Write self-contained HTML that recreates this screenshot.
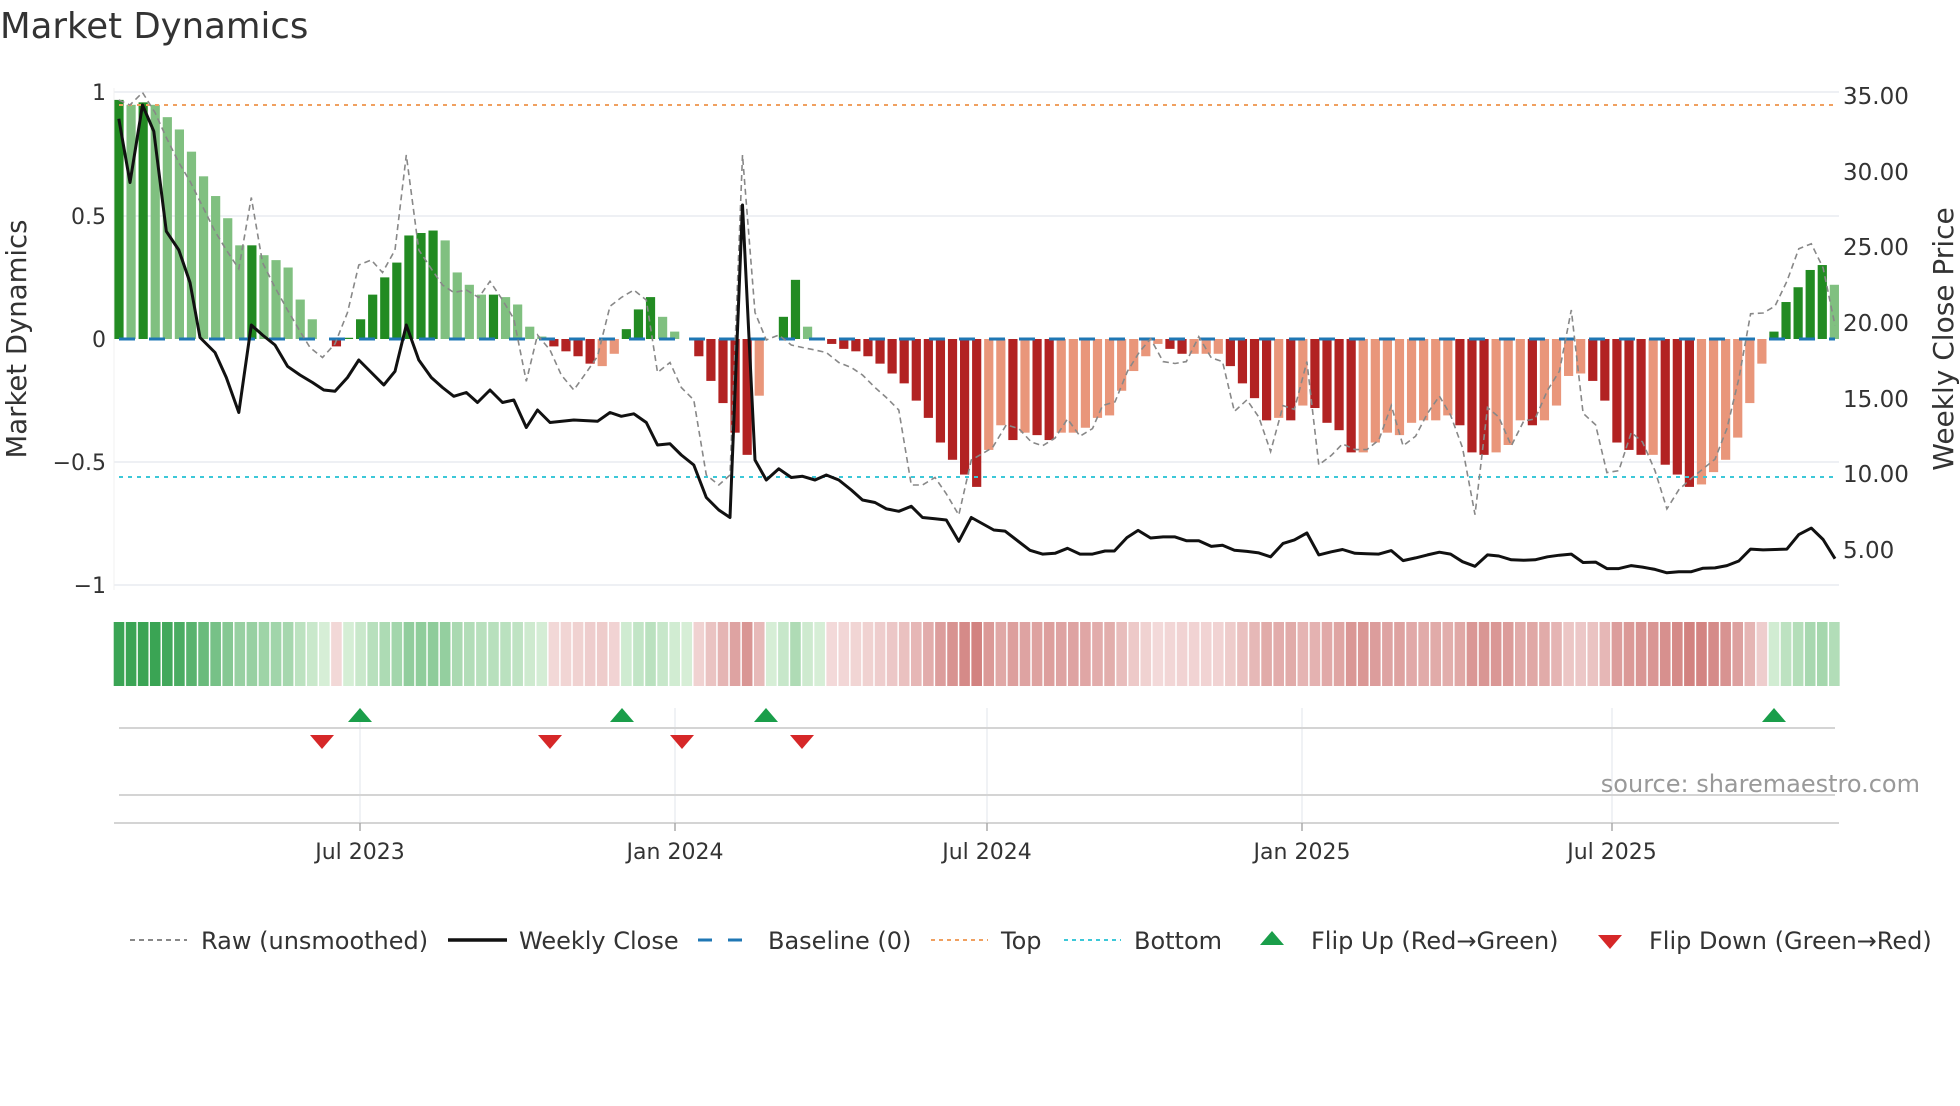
<!DOCTYPE html>
<html><head><meta charset="utf-8">
<style>
html,body{margin:0;padding:0;background:#fff;}
body{width:1960px;height:1102px;overflow:hidden;font-family:"DejaVu Sans","Liberation Sans",sans-serif;}
svg text{font-family:"DejaVu Sans","Liberation Sans",sans-serif;}
</style></head>
<body>
<svg id="s" width="1960" height="1102" viewBox="0 0 1960 1102" xmlns="http://www.w3.org/2000/svg">
<text x="0" y="38" font-size="35.5" fill="#333">Market Dynamics</text>
<g stroke="#eef0f4" stroke-width="2">
<line x1="114" y1="92" x2="1839" y2="92"/>
<line x1="114" y1="216" x2="1839" y2="216"/>
<line x1="114" y1="462" x2="1839" y2="462"/>
<line x1="114" y1="585" x2="1839" y2="585"/>
</g>
<line x1="114" y1="88" x2="114" y2="590" stroke="#f0f0f0" stroke-width="1"/>
<g font-size="22" fill="#333" text-anchor="end">
<text x="106" y="100">1</text>
<text x="106" y="224">0.5</text>
<text x="106" y="347">0</text>
<text x="106" y="470">−0.5</text>
<text x="106" y="593">−1</text>
</g>
<g font-size="23" fill="#333">
<text x="1843" y="104">35.00</text>
<text x="1843" y="180">30.00</text>
<text x="1843" y="255">25.00</text>
<text x="1843" y="331">20.00</text>
<text x="1843" y="407">15.00</text>
<text x="1843" y="482">10.00</text>
<text x="1843" y="558">5.00</text>
</g>
<text transform="translate(26,339) rotate(-90)" font-size="27.5" fill="#333" text-anchor="middle">Market Dynamics</text>
<text transform="translate(1953,339) rotate(-90)" font-size="28" fill="#333" text-anchor="middle">Weekly Close Price</text>
<g id="bars"></g>
<g id="strip"></g>
<line x1="119" y1="339" x2="1835" y2="339" stroke="#1f77b4" stroke-width="3" stroke-dasharray="16 14"/>
<line x1="119" y1="105" x2="1835" y2="105" stroke="#f0a060" stroke-width="2" stroke-dasharray="4 5"/>
<line x1="119" y1="477" x2="1835" y2="477" stroke="#3cc8d8" stroke-width="2" stroke-dasharray="4 5"/>
<polyline id="raw" fill="none" stroke="#888" stroke-width="1.6" stroke-dasharray="6 4"/>
<polyline id="close" fill="none" stroke="#111" stroke-width="3" stroke-linejoin="round"/>
<g stroke="#e6e8ee" stroke-width="1.2">
<line x1="360" y1="708" x2="360" y2="822"/><line x1="675" y1="708" x2="675" y2="822"/>
<line x1="987" y1="708" x2="987" y2="822"/><line x1="1302" y1="708" x2="1302" y2="822"/>
<line x1="1612" y1="708" x2="1612" y2="822"/>
</g>
<line x1="119" y1="728" x2="1835" y2="728" stroke="#d4d4d4" stroke-width="2"/>
<line x1="119" y1="795" x2="1835" y2="795" stroke="#d4d4d4" stroke-width="2"/>
<line x1="114" y1="823" x2="1839" y2="823" stroke="#d4d4d4" stroke-width="2"/>
<g stroke="#aaa" stroke-width="1.5">
<line x1="360" y1="823" x2="360" y2="831"/><line x1="675" y1="823" x2="675" y2="831"/>
<line x1="987" y1="823" x2="987" y2="831"/><line x1="1302" y1="823" x2="1302" y2="831"/>
<line x1="1612" y1="823" x2="1612" y2="831"/>
</g>
<g fill="#1a9e4a">
<polygon points="348,722 372,722 360,708"/><polygon points="610,722 634,722 622,708"/>
<polygon points="754,722 778,722 766,708"/><polygon points="1762,722 1786,722 1774,708"/>
</g>
<g fill="#d62728">
<polygon points="310,735 334,735 322,749"/><polygon points="538,735 562,735 550,749"/>
<polygon points="670,735 694,735 682,749"/><polygon points="790,735 814,735 802,749"/>
</g>
<text x="1920" y="792" font-size="24" fill="#999" text-anchor="end">source: sharemaestro.com</text>
<g font-size="22" fill="#333" text-anchor="middle">
<text x="360" y="859">Jul 2023</text><text x="675" y="859">Jan 2024</text>
<text x="987" y="859">Jul 2024</text><text x="1302" y="859">Jan 2025</text>
<text x="1612" y="859">Jul 2025</text>
</g>
<g font-size="24" fill="#333">
<line x1="130" y1="940" x2="187" y2="940" stroke="#888" stroke-width="2" stroke-dasharray="5 4"/>
<text x="201" y="949">Raw (unsmoothed)</text>
<line x1="448" y1="940" x2="507" y2="940" stroke="#111" stroke-width="3.5"/>
<text x="519" y="949">Weekly Close</text>
<line x1="698" y1="940" x2="754" y2="940" stroke="#1f77b4" stroke-width="3" stroke-dasharray="14 16"/>
<text x="768" y="949">Baseline (0)</text>
<line x1="931" y1="940" x2="988" y2="940" stroke="#f0a060" stroke-width="2" stroke-dasharray="4 4"/>
<text x="1001" y="949">Top</text>
<line x1="1064" y1="940" x2="1121" y2="940" stroke="#3cc8d8" stroke-width="2" stroke-dasharray="4 4"/>
<text x="1134" y="949">Bottom</text>
<polygon points="1260,945 1284,945 1272,931" fill="#1a9e4a"/>
<text x="1311" y="949">Flip Up (Red→Green)</text>
<polygon points="1598,935 1622,935 1610,949" fill="#d62728"/>
<text x="1649" y="949">Flip Down (Green→Red)</text>
</g>
</svg>
<script>
var V=[[.97,1],[.95,0],[.96,1],[.95,0],[.90,0],[.85,0],[.76,0],[.66,0],[.58,0],[.49,0],[.38,0],[.38,1],[.34,0],[.32,0],[.29,0],[.16,0],[.08,0],[0,0],[-.03,1],[.005,1],[.08,1],[.18,1],[.25,1],[.31,1],[.42,1],[.43,1],[.44,1],[.40,0],[.27,0],[.22,0],[.18,0],[.18,1],[.17,0],[.14,0],[.05,0],[.01,0],[-.03,1],[-.05,1],[-.07,1],[-.10,1],[-.11,0],[-.06,0],[.04,1],[.12,1],[.17,1],[.09,0],[.03,0],[0,0],[-.07,1],[-.17,1],[-.26,1],[-.38,1],[-.47,1],[-.23,0],[0,0],[.09,1],[.24,1],[.05,0],[0,0],[-.02,1],[-.04,1],[-.05,1],[-.07,1],[-.10,1],[-.14,1],[-.18,1],[-.25,1],[-.32,1],[-.42,1],[-.49,1],[-.55,1],[-.60,1],
[-.45,0],[-.35,0],[-.41,1],[-.38,0],[-.39,1],[-.41,1],[-.38,0],[-.38,0],[-.36,0],[-.32,0],[-.31,0],[-.21,0],[-.13,0],[-.07,0],[-.02,0],[-.04,1],[-.06,1],[-.06,0],[-.06,0],[-.06,0],[-.11,1],[-.18,1],[-.24,1],[-.33,1],[-.32,0],[-.33,1],[-.27,0],[-.28,1],[-.34,1],[-.37,1],[-.46,1],[-.46,0],[-.42,0],[-.38,0],[-.39,0],[-.34,0],[-.33,0],[-.33,0],[-.31,0],[-.35,1],[-.46,1],[-.47,1],[-.46,0],[-.43,0],[-.33,0],[-.35,1],[-.33,0],[-.27,0],[-.15,0],[-.14,0],[-.17,1],[-.25,1],[-.42,1],[-.45,1],[-.47,1],[-.47,0],[-.51,1],[-.55,1],[-.60,1],[-.59,0],[-.54,0],[-.49,0],[-.40,0],[-.26,0],[-.10,0],[.03,1],[.15,1],[.21,1],[.28,1],[.30,1],[.22,0]];
var NS="http://www.w3.org/2000/svg",bars=document.getElementById('bars'),strip=document.getElementById('strip');
function el(g,t,a){var e=document.createElementNS(NS,t);for(var k in a)e.setAttribute(k,a[k]);g.appendChild(e);}
function mix(a,b,t){return 'rgb('+a.map(function(v,i){return Math.round(v+(b[i]-v)*t)}).join(',')+')';}
for(var i=0;i<V.length;i++){var v=V[i][0],d=V[i][1],x=119+i*12.08;
 var h=Math.abs(v)*246.5;if(h>0.5){var y=v>0?339-h:339;
 var c=v>0?(d?'#228b22':'#80c080'):(d?'#b22222':'#e9967a');
 el(bars,'rect',{x:x-4.6,y:y,width:9.2,height:h,fill:c});}
 var t=Math.min(1,Math.abs(v)/0.95);
 var sc=v>=0?mix([214,238,214],[58,164,84],t):mix([244,220,220],[210,130,128],Math.min(1,Math.abs(v)/0.6));
 el(strip,'rect',{x:x-5.3,y:622,width:10.6,height:64,fill:sc});}
var cp=[[95,95],[104,146],[114,84],[123,105],[133,185],[143,200],[152,226],[160,270],[172,282],[181,302],[191,330],[201,260],[210,268],[220,276],[230,293],[240,300],[250,306],[259,312],[268,313],[278,302],[287,288],[297,298],[307,308],[316,297],[325,260],[335,288],[345,302],[354,310],[363,317],[373,314],[382,322],[392,312],[402,322],[411,320],[421,342],[430,328],[440,338],[459,336],[478,337],[488,330],[497,333],[507,331],[517,338],[526,356],[536,355],[545,364],[555,372],[565,398],[575,408],[584,414],[594,164],[604,368],[613,384],[623,375],[633,382],[642,381],[652,384],[661,380],[671,384],[681,392],[690,400],[700,402],[709,407],[719,409],[729,405],[738,414],[748,415],[757,416],[767,433],[777,414]];
var cz=[[22,1385],[40,1388],[80,1438],[100,1448],[120,1446],[140,1433],[160,1448],[180,1448],[200,1440],[215,1440],[235,1405],[253,1386],[273,1406],[293,1403],[312,1403],[330,1413],[350,1413],[370,1428],[388,1425],[407,1438],[427,1441],[446,1445],[465,1455],[485,1420],[503,1411],[523,1393],[542,1450],[562,1442],[580,1436],[600,1446],[619,1447],[638,1448],[658,1439],[677,1465],[697,1458],[716,1450],[735,1443],[753,1448],[772,1468],[792,1480],[812,1450],[830,1453],[850,1463],[870,1464],[888,1463],[908,1455],[927,1451],[946,1448],[965,1470],[985,1469],[1003,1486],[1022,1486],[1042,1478],[1060,1482],[1080,1488],[1099,1497],[1118,1494],[1138,1494],[1157,1485],[1176,1484],[1195,1478],[1214,1466],[1233,1435],[1253,1437],[1272,1436],[1291,1435],[1310,1397],[1330,1380],[1349,1410],[1368,1460]];
var rp=[[95,80],[104,84],[114,74],[124,90],[133,110],[143,130],[152,145],[162,165],[172,185],[181,200],[191,215],[201,158],[210,210],[220,230],[230,248],[240,265],[248,278],[258,286],[268,275],[278,250],[287,212],[297,208],[306,218],[316,200],[325,124],[335,200],[345,215],[354,228],[363,234],[373,232],[383,238],[392,225],[402,240],[411,255],[421,305],[430,268],[440,280],[449,300],[459,312],[469,298],[478,285],[488,245],[497,238],[507,232],[517,240],[526,298],[536,290],[545,310],[555,320],[565,380],[575,388],[584,380],[594,124],[604,250],[613,272],[623,268],[633,276],[642,278],[652,280],[661,282],[671,290],[681,294],[690,300],[700,310],[709,318],[719,328],[729,388],[738,388],[748,382],[757,395],[767,412],[777,368]];
var rz=[[20,1170],[42,1110],[62,1120],[82,1155],[100,1165],[120,1145],[140,1095],[160,1140],[180,1120],[196,1060],[216,1050],[236,970],[255,920],[273,885],[293,945],[312,950],[330,945],[350,880],[370,935],[388,945],[407,1075],[427,1045],[446,1090],[465,1180],[485,1060],[503,1070],[523,945],[542,1215],[562,1190],[580,1160],[600,1175],[619,1175],[638,1150],[658,1060],[677,1165],[697,1140],[716,1080],[735,1035],[753,1085],[772,1170],[792,1345],[812,1065],[830,1090],[850,1165],[870,1100],[888,1095],[908,1020],[927,970],[946,810],[965,1080],[985,1110],[1003,1235],[1022,1230],[1042,1130],[1060,1155],[1080,1230],[1099,1330],[1118,1280],[1138,1250],[1157,1225],[1176,1200],[1195,1120],[1214,990],[1233,820],[1253,818],[1272,800],[1291,735],[1310,650],[1330,637],[1349,700],[1368,850]];
function pts(a,b){var o=a.map(function(p){return (p[0]*1.25).toFixed(1)+','+(p[1]*1.25).toFixed(1)});
 b.forEach(function(p){o.push((980+p[0]/1.6).toFixed(1)+','+(p[1]/2.6133).toFixed(1))});return o.join(' ');}
document.getElementById('close').setAttribute('points',pts(cp,cz));
document.getElementById('raw').setAttribute('points',pts(rp,rz));
</script>
</body></html>
